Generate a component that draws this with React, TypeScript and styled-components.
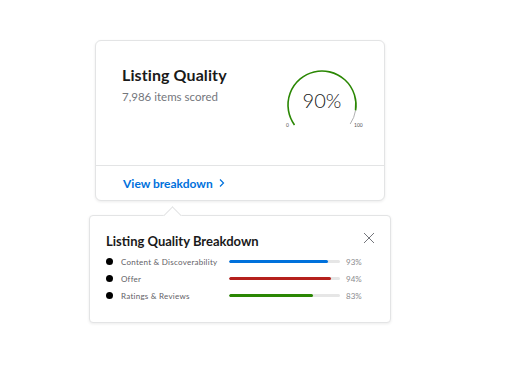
import styled, { createGlobalStyle } from "styled-components";

const GlobalStyle = createGlobalStyle`
  body {
    margin: 0;
    background: #fff;
    font-family: Lato, "Open Sans", sans-serif;
  }
`;

const Page = styled.div`
  width: 512px;
  height: 390px;
  padding-top: 40px;
  box-sizing: border-box;
  display: flex;
  flex-direction: column;
`;

const ScoreCard = styled.div`
  margin-left: 95px;
  width: 290px;
  height: 161px;
  box-sizing: border-box;
  border: 1px solid #e3e4e5;
  border-radius: 6px;
  box-shadow: 0 1px 3px rgba(0, 0, 0, 0.08);
  display: flex;
  flex-direction: column;
  background: #fff;
`;

const CardBody = styled.div`
  height: 125px;
  display: flex;
  justify-content: space-between;
  padding: 24px 20px 0 26px;
  box-sizing: border-box;
  border-bottom: 1px solid #e3e4e5;
`;

const Title = styled.h2`
  margin: 0;
  font-size: 16px;
  font-weight: 700;
  color: #1a1a1a;
  letter-spacing: 0.1px;
`;

const Subtitle = styled.div`
  margin-top: 6px;
  font-size: 11.5px;
  color: #74767c;
`;

const Gauge = styled.div`
  position: relative;
  width: 86px;
  height: 72px;
  margin-top: 4px;
  margin-right: -2px;
`;

const GaugeValue = styled.div`
  position: absolute;
  left: 0;
  width: 84px;
  top: 19px;
  text-align: center;
  font-size: 20px;
  font-weight: 300;
  color: #1a1a1a;
`;

const CardFooter = styled.div`
  flex: 1;
  display: flex;
  align-items: center;
  padding-left: 27px;
  font-size: 12px;
  font-weight: 700;
  color: #0071dc;
  gap: 5px;
`;

const Popover = styled.div`
  position: relative;
  margin-top: 14px;
  margin-left: 89px;
  width: 302px;
  height: 108px;
  box-sizing: border-box;
  border: 1px solid #e3e4e5;
  border-radius: 4px;
  box-shadow: 0 1px 3px rgba(0, 0, 0, 0.08);
  background: #fff;
  padding: 17px 16px 0 16px;

  &::before {
    content: "";
    position: absolute;
    left: 76px;
    top: -7px;
    width: 12px;
    height: 12px;
    background: #fff;
    border-left: 1px solid #e3e4e5;
    border-top: 1px solid #e3e4e5;
    transform: rotate(45deg);
  }
`;

const PopoverHeader = styled.div`
  display: flex;
  justify-content: space-between;
  align-items: center;
  margin-bottom: 4px;
`;

const PopoverTitle = styled.h3`
  margin: 0;
  font-size: 13px;
  font-weight: 700;
  color: #1a1a1a;
`;

const CloseButton = styled.button`
  border: none;
  background: none;
  padding: 0;
  margin-right: -1px;
  margin-top: -7px;
  display: flex;
  cursor: pointer;
`;

const Row = styled.div`
  display: grid;
  grid-template-columns: 15px 108px 111px 1fr;
  align-items: center;
  height: 17px;
`;

const Bullet = styled.span`
  width: 7px;
  height: 7px;
  border-radius: 50%;
  background: #000;
`;

const Label = styled.span`
  font-size: 8px;
  color: #5f6166;
  letter-spacing: 0.25px;
`;

const Track = styled.div`
  height: 3px;
  border-radius: 2px;
  background: #e6e6e6;
  overflow: hidden;
`;

const Fill = styled.div<{ $color: string }>`
  height: 100%;
  border-radius: 2px;
  background: ${(p) => p.$color};
`;

const Percent = styled.span`
  font-size: 8px;
  color: #8a8b8e;
  padding-left: 6px;
`;

// fill is the drawn length of the bar, as in the design
const rows = [
  { label: "Content & Discoverability", value: 93, fill: 89, color: "#0071dc" },
  { label: "Offer", value: 94, fill: 92, color: "#b5201c" },
  { label: "Ratings & Reviews", value: 83, fill: 76, color: "#2a8703" },
];

function polar(cx: number, cy: number, r: number, deg: number) {
  const a = (deg * Math.PI) / 180;
  return [cx + r * Math.sin(a), cy - r * Math.cos(a)];
}

function arc(cx: number, cy: number, r: number, from: number, to: number) {
  const [x1, y1] = polar(cx, cy, r, from);
  const [x2, y2] = polar(cx, cy, r, to);
  const large = to - from > 180 ? 1 : 0;
  return `M ${x1} ${y1} A ${r} ${r} 0 ${large} 1 ${x2} ${y2}`;
}

const GaugeArc = ({ value }: { value: number }) => {
  const start = -126;
  const end = 124;
  const mid = start + ((end - start) * value) / 100;
  return (
    <svg width="86" height="72" viewBox="0 0 86 72">
      <path d={arc(42, 36, 34, mid, end)} fill="none" stroke="#9a9b9d" strokeWidth="0.8" />
      <path d={arc(42, 36, 34, start, mid)} fill="none" stroke="#2a8703" strokeWidth="1.6" />
      <text x="6" y="58" fontSize="5" fill="#555" fontFamily="Lato, sans-serif">0</text>
      <text x="74" y="58" fontSize="5" fill="#555" fontFamily="Lato, sans-serif">100</text>
    </svg>
  );
};

export default function App() {
  return (
    <Page>
      <GlobalStyle />
      <ScoreCard>
        <CardBody>
          <div>
            <Title>Listing Quality</Title>
            <Subtitle>7,986 items scored</Subtitle>
          </div>
          <Gauge>
            <GaugeArc value={90} />
            <GaugeValue>90%</GaugeValue>
          </Gauge>
        </CardBody>
        <CardFooter>
          View breakdown
          <svg width="8" height="10" viewBox="0 0 8 10">
            <path d="M2 1.5 L5.5 5 L2 8.5" fill="none" stroke="#0071dc" strokeWidth="1.2" />
          </svg>
        </CardFooter>
      </ScoreCard>
      <Popover>
        <PopoverHeader>
          <PopoverTitle>Listing Quality Breakdown</PopoverTitle>
          <CloseButton aria-label="Close">
            <svg width="12" height="12" viewBox="0 0 12 12">
              <path d="M1 1 L11 11 M11 1 L1 11" stroke="#74767c" strokeWidth="1" />
            </svg>
          </CloseButton>
        </PopoverHeader>
        {rows.map((r) => (
          <Row key={r.label}>
            <Bullet />
            <Label>{r.label}</Label>
            <Track>
              <Fill $color={r.color} style={{ width: `${r.fill}%` }} />
            </Track>
            <Percent>{r.value}%</Percent>
          </Row>
        ))}
      </Popover>
    </Page>
  );
}
